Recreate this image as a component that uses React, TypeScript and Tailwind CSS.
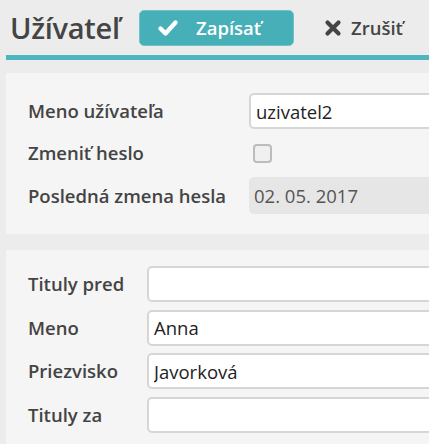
import { useState } from 'react'

function CheckIcon() {
  return (
    <svg width="22" height="18" viewBox="0 0 22 18" fill="none">
      <path d="M3.5 9.5 L8.5 14.5 L18.5 3.5" stroke="white" strokeWidth="4.4" strokeLinecap="round" strokeLinejoin="round" />
    </svg>
  )
}

function TimesIcon() {
  return (
    <svg width="18" height="18" viewBox="0 0 18 18" fill="none">
      <path d="M3.5 3.5 L14.5 14.5 M14.5 3.5 L3.5 14.5" stroke="#444" strokeWidth="4.2" strokeLinecap="round" />
    </svg>
  )
}

function TextInput({ value, onChange }: { value: string; onChange: (v: string) => void }) {
  return (
    <input
      value={value}
      onChange={(e) => onChange(e.target.value)}
      className="h-[36px] w-[400px] rounded-[5px] border-2 border-[#d6d6d6] bg-white px-[5px] text-[18.5px] font-normal text-[#222] outline-none"
    />
  )
}

export default function App() {
  const [login, setLogin] = useState('uzivatel2')
  const [changePwd, setChangePwd] = useState(false)
  const [titleBefore, setTitleBefore] = useState('')
  const [firstName, setFirstName] = useState('Anna')
  const [lastName, setLastName] = useState('Javorková')
  const [titleAfter, setTitleAfter] = useState('')

  return (
    <div className="h-[444px] w-[429px] overflow-hidden bg-[#ececec] font-['Open_Sans',sans-serif] text-[#444]">
      {/* toolbar */}
      <div className="flex h-[55px] items-center pl-[10px]">
        <h1 className="w-[112px] text-[29px] font-semibold tracking-[-0.3px] text-[#444]">Užívateľ</h1>
        <button className="ml-[17px] flex h-[36px] w-[155px] items-center rounded-[5px] border border-[#6fc4ca] bg-[#47afb7] pl-[17px] text-[18.5px] font-semibold text-white">
          <CheckIcon />
          <span className="ml-[17px]">Zapísať</span>
        </button>
        <button className="ml-[30px] flex items-center text-[18.5px] font-semibold text-[#444]">
          <TimesIcon />
          <span className="ml-[9px]">Zrušiť</span>
        </button>
      </div>
      <div className="ml-[6px] h-[5px] bg-[#4db6be]" />

      <div className="ml-[6px] mt-[13px] flex flex-col gap-[16px]">
        {/* account */}
        <section className="bg-[#f5f5f5] px-[22px] pb-[20px] pt-[20px]">
          <div className="grid grid-cols-[221px_1fr] items-center gap-y-[6px] text-[18.5px] font-semibold">
            <label className="flex h-[36px] items-center">Meno užívateľa</label>
            <TextInput value={login} onChange={setLogin} />
            <label className="flex h-[36px] items-center">Zmeniť heslo</label>
            <div className="flex h-[36px] items-center pl-[4px]">
              <button
                onClick={() => setChangePwd((v) => !v)}
                className="h-[19px] w-[19px] rounded-[4px] border-2 border-[#bcbcbc] bg-[#f0f0f0]"
                aria-pressed={changePwd}
              />
            </div>
            <label className="flex h-[36px] items-center">Posledná zmena hesla</label>
            <div className="flex h-[37px] w-[400px] items-center rounded-[5px] bg-[#e6e6e6] px-[5px] text-[18.5px] font-normal text-[#555]">
              02. 05. 2017
            </div>
          </div>
        </section>

        {/* person */}
        <section className="bg-[#f5f5f5] px-[22px] pb-[20px] pt-[16px]">
          <div className="grid grid-cols-[119px_1fr] items-center gap-y-[7.5px] text-[18.5px] font-semibold">
            <label>Tituly pred</label>
            <TextInput value={titleBefore} onChange={setTitleBefore} />
            <label>Meno</label>
            <TextInput value={firstName} onChange={setFirstName} />
            <label>Priezvisko</label>
            <TextInput value={lastName} onChange={setLastName} />
            <label>Tituly za</label>
            <TextInput value={titleAfter} onChange={setTitleAfter} />
          </div>
        </section>
      </div>
    </div>
  )
}
